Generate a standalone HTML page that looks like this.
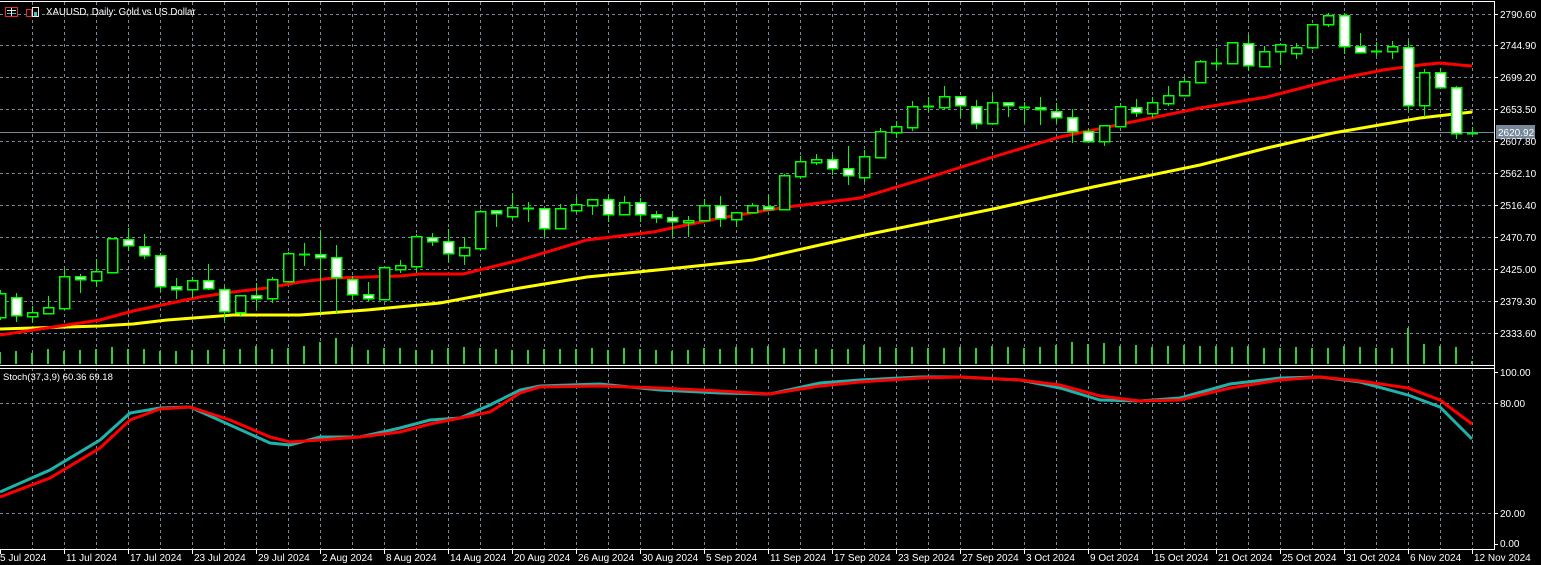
<!DOCTYPE html>
<html><head><meta charset="utf-8"><style>
html,body{margin:0;padding:0;background:#000;width:1541px;height:565px;overflow:hidden}
svg{display:block}
text{font-family:"Liberation Sans",sans-serif;font-size:10px;fill:#fff}
</style></head><body>
<svg id="s" width="1541" height="565" viewBox="0 0 1541 565" xmlns="http://www.w3.org/2000/svg">
<g id="grid" stroke="#778899" stroke-width="1" stroke-dasharray="3,3" shape-rendering="crispEdges"></g>
<g id="vol" stroke="#32cd32" stroke-width="2" shape-rendering="crispEdges"></g>
<line x1="0" y1="132.5" x2="1494" y2="132.5" stroke="#778899" stroke-width="1"/>
<polyline fill="none" stroke="#ffff00" stroke-width="3" points="0,329 100,326 133,324 167,320 233,315 300,315 367,310 440,303 520,288 587,277 687,267 753,260 860,236 993,209 1093,187 1200,165 1267,148 1333,133 1420,118 1472,112"/>
<polyline fill="none" stroke="#ff0000" stroke-width="3" points="0,335 100,320 133,311 200,297 233,292 267,288 300,282 333,278 367,277 400,276 420,274 463,274 520,260 587,240 653,232 720,218 787,207 860,198 927,178 993,157 1060,137 1127,123 1200,108 1267,97 1333,80 1383,70 1420,65 1440,63 1460,65 1472,66"/>
<g id="candles" shape-rendering="crispEdges"></g>
<polyline fill="none" stroke="#20b2aa" stroke-width="3" points="0,492 50,470 100,440 130,413 160,408 190,407 230,425 270,443 290,445 320,437 360,437 400,428 430,420 460,418 490,405 520,390 540,386 600,384 660,390 720,393 770,394 820,383 860,380 920,377 960,377 1020,380 1060,388 1100,400 1140,401 1180,398 1230,384 1280,378 1320,377 1360,382 1408,395 1440,407 1472,439"/>
<polyline fill="none" stroke="#ff0000" stroke-width="3" points="0,497 50,478 100,448 130,420 160,409 190,407 230,420 270,437 290,442 320,440 360,437 400,432 430,424 460,418 490,412 520,393 540,387 600,386 660,388 720,391 770,394 820,386 860,382 920,378 960,377 1020,380 1060,385 1100,396 1140,401 1180,400 1230,388 1280,380 1320,377 1360,381 1408,388 1440,400 1472,424"/>
<g stroke="#fff" stroke-width="1" shape-rendering="crispEdges">
<line x1="0" y1="1.5" x2="1495" y2="1.5"/>
<line x1="1494.5" y1="1" x2="1494.5" y2="550"/>
<line x1="0" y1="365.5" x2="1495" y2="365.5"/>
<line x1="0" y1="368.5" x2="1495" y2="368.5"/>
<line x1="0" y1="549.5" x2="1495" y2="549.5"/>
</g>
<g id="ticks" stroke="#fff" stroke-width="1" shape-rendering="crispEdges"></g>
<rect x="1496" y="125" width="39" height="14" fill="#778899"/>
<g>
<text x="1500" y="18">2790.60</text>
<text x="1500" y="49">2744.90</text>
<text x="1500" y="81">2699.20</text>
<text x="1500" y="113">2653.50</text>
<text x="1498" y="136">2620.92</text>
<text x="1500" y="145">2607.80</text>
<text x="1500" y="177">2562.10</text>
<text x="1500" y="209">2516.40</text>
<text x="1500" y="241">2470.70</text>
<text x="1500" y="273">2425.00</text>
<text x="1500" y="305">2379.30</text>
<text x="1500" y="337">2333.60</text>
<text x="1500" y="376">100.00</text>
<text x="1500" y="407">80.00</text>
<text x="1500" y="517">20.00</text>
<text x="1500" y="547">0.00</text>
<text x="46" y="15" style="font-size:9.7px">XAUUSD, Daily:  Gold vs US Dollar</text>
<text x="3" y="380" style="font-size:9.5px">Stoch(37,3,9) 60.36 69.18</text>
</g>
<g style="font-size:9.5px">
<text x="0" y="561">5 Jul 2024</text>
<text x="66" y="561">11 Jul 2024</text>
<text x="130" y="561">17 Jul 2024</text>
<text x="194" y="561">23 Jul 2024</text>
<text x="258" y="561">29 Jul 2024</text>
<text x="322" y="561">2 Aug 2024</text>
<text x="386" y="561">8 Aug 2024</text>
<text x="450" y="561">14 Aug 2024</text>
<text x="514" y="561">20 Aug 2024</text>
<text x="578" y="561">26 Aug 2024</text>
<text x="642" y="561">30 Aug 2024</text>
<text x="706" y="561">5 Sep 2024</text>
<text x="770" y="561">11 Sep 2024</text>
<text x="834" y="561">17 Sep 2024</text>
<text x="898" y="561">23 Sep 2024</text>
<text x="962" y="561">27 Sep 2024</text>
<text x="1026" y="561">3 Oct 2024</text>
<text x="1090" y="561">9 Oct 2024</text>
<text x="1154" y="561">15 Oct 2024</text>
<text x="1218" y="561">21 Oct 2024</text>
<text x="1282" y="561">25 Oct 2024</text>
<text x="1346" y="561">31 Oct 2024</text>
<text x="1410" y="561">6 Nov 2024</text>
<text x="1474" y="561">12 Nov 2024</text>
</g>
<g transform="translate(5,7)" shape-rendering="crispEdges">
<rect x="0.5" y="0.5" width="12" height="9" fill="#000" stroke="#e03030"/>
<line x1="2" y1="3.5" x2="11" y2="3.5" stroke="#e8e8e8"/><line x1="2" y1="6.5" x2="11" y2="6.5" stroke="#40c0c0"/>
<line x1="6.5" y1="1" x2="6.5" y2="9" stroke="#e8e8e8"/>
<rect x="21.5" y="2.5" width="5" height="7" fill="#000" stroke="#e03030"/>
<rect x="27.5" y="0.5" width="6" height="9" fill="#000" stroke="#e8e8e8"/>
<rect x="29" y="5" width="3" height="4" fill="#40c0c0"/>
</g>
</svg>
<script>
var NS="http://www.w3.org/2000/svg";
function el(p,t,a){var e=document.createElementNS(NS,t);for(var k in a)e.setAttribute(k,a[k]);p.appendChild(e);return e;}
var g=document.getElementById('grid');
for(var x=32;x<1494;x+=32)el(g,'line',{x1:x+.5,y1:2,x2:x+.5,y2:549});
[14,45,77,109,141,173,205,237,269,301,333,403,513].forEach(function(y){el(g,'line',{x1:0,y1:y+.5,x2:1494,y2:y+.5});});
var t=document.getElementById('ticks');
[14,45,77,109,141,173,205,237,269,301,333,372,403,513,544].forEach(function(y){el(t,'line',{x1:1494,y1:y+.5,x2:1498,y2:y+.5});});
for(var x=0;x<=1472;x+=64)el(t,'line',{x1:x+.5,y1:549,x2:x+.5,y2:554});
var D=[[293,317,290,320,0],[297,315,293,322,1],[312,316,306,323,0],[307,313,296,314,0],[276,308,269,308,0],[276,279,274,293,1],[271,280,259,287,0],[238,272,238,273,0],[239,245,228,251,1],[246,255,234,259,1],[255,286,253,292,1],[286,289,278,299,1],[280,289,277,298,0],[280,288,264,290,1],[289,311,287,321,1],[295,312,295,317,0],[295,298,283,309,1],[279,298,277,303,0],[253,281,252,281,0],[254,254,243,266,0],[254,257,232,313,1],[257,277,245,313,1],[279,294,276,300,1],[294,298,282,302,1],[267,299,266,300,0],[265,269,260,273,0],[236,266,234,273,0],[237,241,233,246,1],[241,253,229,262,1],[247,255,237,265,0],[211,248,210,250,0],[210,213,210,227,1],[207,216,193,219,0],[208,208,202,222,0],[208,228,208,237,1],[208,228,204,228,0],[204,210,197,213,0],[199,205,199,215,0],[199,214,195,222,1],[202,214,196,215,0],[202,214,198,222,1],[214,217,211,223,1],[217,221,211,237,1],[220,222,216,237,0],[205,220,199,220,0],[205,218,196,227,1],[212,219,212,227,0],[205,212,203,212,0],[206,209,195,209,1],[175,209,174,209,0],[161,176,156,176,0],[159,162,154,165,0],[159,168,155,175,1],[168,175,146,185,1],[156,177,150,182,0],[131,157,128,157,0],[126,132,121,138,0],[106,127,101,131,0],[106,106,97,112,0],[96,107,86,109,0],[96,105,96,117,1],[106,123,100,129,1],[102,123,95,125,0],[102,105,102,117,1],[107,107,102,123,0],[107,109,97,125,1],[111,117,103,123,1],[117,131,109,143,1],[131,141,128,141,1],[125,141,125,146,0],[106,126,103,126,0],[107,112,99,117,1],[102,113,97,118,0],[95,103,86,106,0],[81,95,78,95,0],[61,82,60,82,0],[63,63,48,69,0],[42,63,42,63,0],[43,65,35,71,1],[51,66,46,66,0],[44,51,43,65,0],[47,53,43,59,0],[24,47,24,49,0],[15,24,13,27,0],[15,46,13,54,1],[46,52,33,53,1],[51,51,42,56,0],[46,51,41,59,0],[47,105,41,111,1],[72,105,69,117,0],[72,87,68,87,1],[87,133,86,139,1],[133,133,127,133,0]];
var c=document.getElementById('candles'),v=document.getElementById('vol');
var V=[12,13,11,15,13,14,15,17,15,15,13,13,14,14,15,15,18,15,16,18,22,26,17,14,16,16,14,14,16,17,16,15,14,14,15,15,15,16,14,16,15,14,13,14,16,15,17,16,18,16,15,15,15,15,19,17,16,17,16,16,17,16,18,17,16,17,19,22,20,21,18,19,17,18,19,18,18,17,18,16,16,17,16,16,18,17,16,16,36,20,18,17,3];
D.forEach(function(d,k){var x=16*k;
el(v,'line',{x1:x,y1:364,x2:x,y2:364-V[k]});
el(c,'line',{x1:x+.5,y1:d[2],x2:x+.5,y2:d[3],stroke:'#00ff00','stroke-width':1});
if(d[1]-d[0]<1){el(c,'line',{x1:x-5,y1:d[0]+.5,x2:x+6,y2:d[0]+.5,stroke:'#00ff00','stroke-width':2});}
else el(c,'rect',{x:x-4.5,y:d[0]+.5,width:10,height:d[1]-d[0],fill:d[4]?'#fff':'#000',stroke:'#00ff00','stroke-width':1.5});
});
</script>
</body></html>
